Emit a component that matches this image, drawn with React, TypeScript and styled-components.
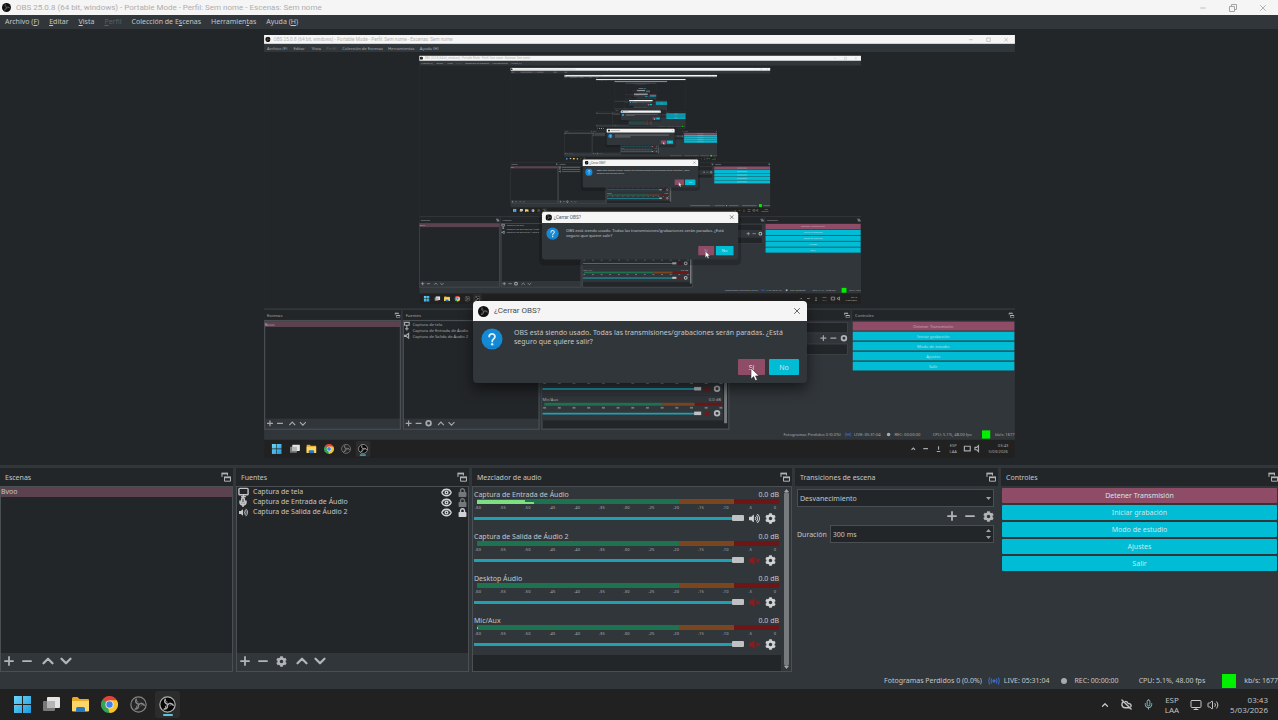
import React from 'react';
import styled, { createGlobalStyle, css } from 'styled-components';
import { Plus, Minus, ChevronUp, ChevronDown, X, Eye, Monitor, Mic, CloudOff, Volume2 } from 'lucide-react';
import { FaCog, FaLock, FaVolumeUp, FaVolumeMute } from 'react-icons/fa';

const color = {
  panel: '#31363b',
  dark: '#232629',
  border: '#4a4f53',
  text: '#c4c6c7',
  cyan: '#00bcd4',
  slider: '#1fa1b3',
  pink: '#8e4c66',
  selected: '#5c414e',
  taskbar: '#212121',
};

const GlobalStyle = createGlobalStyle`
  *, *::before, *::after { box-sizing: border-box; }
  html, body, #root { height: 100%; }
  body { margin: 0; overflow: hidden; background: ${color.taskbar}; }
  body, button, input, select { font-family: 'Noto Sans', 'Open Sans', sans-serif; font-size: 7px; }
  button { margin: 0; padding: 0; border: 0; background: none; color: inherit; display: inline-flex; align-items: center; justify-content: center; }
  svg { display: block; flex: none; }
`;

const Screen = styled.div`
  position: relative;
  display: flex;
  flex-direction: column;
  height: 100vh;
  color: ${color.text};
  background: ${color.panel};
  overflow: hidden;
`;

const TitleBar = styled.header`
  display: flex;
  align-items: center;
  height: 15px;
  padding: 0 10px 0 2px;
  gap: 5px;
  background: #f5f5f5;
  color: #aeaeae;
`;

const WindowTitle = styled.h1`
  flex: 1;
  margin: 0;
  font: 400 8px/14px Roboto, sans-serif;
`;

const WindowButtons = styled.div`
  display: flex;
  gap: 20px;
`;

const CaptionButton = styled.button`
  width: 10px;
  height: 10px;
  color: #a4a4a4;
`;

const MenuBar = styled.nav`
  display: flex;
  align-items: center;
  gap: 10px;
  height: 14px;
  padding-left: 5px;
`;

const MenuItem = styled.button<{ $dim?: boolean }>`
  line-height: 14px;
  white-space: pre;
  color: ${(p) => (p.$dim ? '#5b6065' : color.text)};
`;

const Preview = styled.main`
  flex: 1;
  min-height: 0;
  padding: 6px 0 7px 1px;
  background: ${color.dark};
  & > svg { width: 100%; height: 100%; }
`;

const Docks = styled.div`
  display: grid;
  grid-template-columns: 233fr 233fr 320fr 203fr 277fr;
  gap: 3px;
  height: 207px;
  padding-top: 3px;
`;

const Dock = styled.section`
  display: flex;
  flex-direction: column;
  min-width: 0;
  overflow: hidden;
`;

const DockHeader = styled.div<{ $flush?: boolean }>`
  display: flex;
  align-items: center;
  justify-content: space-between;
  height: 18px;
  padding: 0 ${(p) => (p.$flush ? 0 : 2)}px 0 5px;
  background: ${color.dark};
`;

const DockTitle = styled.h2`
  margin: 0;
  font-size: 7px;
  font-weight: 400;
`;

const Frame = styled.div`
  flex: 1;
  display: flex;
  flex-direction: column;
  min-height: 0;
  border: 1px solid ${color.border};
`;

const List = styled.ul`
  flex: 1;
  margin: 0;
  padding: 0;
  list-style: none;
  background: ${color.dark};
`;

const SceneRow = styled.li`
  height: 10px;
  line-height: 10px;
  background: ${color.selected};
`;

const SourceRow = styled.li`
  display: flex;
  align-items: center;
  height: 10px;
  padding: 0 1px 0 1px;
  gap: 5px;
`;

const SourceIcon = styled.span`
  display: flex;
  justify-content: center;
  width: 10px;
`;

const SourceName = styled.span`
  flex: 1;
  line-height: 10px;
`;

const RowButtons = styled.span`
  display: flex;
  align-items: center;
  gap: 5px;
`;

const IconButton = styled.button<{ $faint?: boolean }>`
  min-width: 10px;
  height: 10px;
  color: ${(p) => (p.$faint ? '#74787b' : '#d0d2d3')};
`;

const ToolBar = styled.div`
  display: flex;
  align-items: center;
  gap: 6px;
  height: 18px;
  padding: 0 0 2px 2px;
`;

const ToolButton = styled.button<{ $apart?: boolean }>`
  width: 12px;
  height: 14px;
  margin-left: ${(p) => (p.$apart ? 3 : 0)}px;
  color: #b3b5b6;
`;

const MixerFrame = styled(Frame)`
  flex-direction: row;
  background: ${color.dark};
`;

const Channels = styled.div`
  flex: 1;
  min-width: 0;
`;

const Channel = styled.div`
  height: 42px;
  padding: 3px 2px 0 1px;
  background: ${color.panel};
`;

const ChannelHead = styled.div`
  display: flex;
  justify-content: space-between;
  height: 9px;
  line-height: 9px;
`;

const Meter = styled.div`
  display: flex;
  flex-direction: column;
  justify-content: center;
  height: 5px;
  margin-left: 3px;
  background: linear-gradient(to right, #1d7250 67%, #7b451d 67% 85%, #6e1515 85%);
`;

const Level = styled.div`
  height: 2px;
  background: #7ce083;
`;

const Scale = styled.div`
  display: flex;
  justify-content: space-between;
  height: 8px;
  color: #b0b3b5;
  font-size: 4px;
  line-height: 8px;
`;

const Tick = styled.span`
  width: 8px;
  text-align: center;
`;

const FaderRow = styled.div`
  display: flex;
  align-items: center;
  gap: 5px;
  height: 12px;
  padding-right: 3px;
`;

const thumb = css`
  appearance: none;
  width: 12px;
  height: 6px;
  border: 0;
  border-radius: 1px;
  background: #bfc1c2;
`;

const Fader = styled.input`
  appearance: none;
  flex: 1;
  min-width: 0;
  height: 6px;
  margin: 0;
  background: linear-gradient(${color.slider}, ${color.slider}) center / 100% 3px no-repeat;
  &::-webkit-slider-thumb { ${thumb} }
  &::-moz-range-thumb { ${thumb} }
`;

const ScrollBar = styled.div`
  display: flex;
  flex-direction: column;
  align-items: center;
  justify-content: space-between;
  width: 10px;
  padding: 2px 0;
  background: ${color.panel};
`;

const ScrollThumb = styled.div`
  flex: 1;
  width: 5px;
  border-radius: 2px;
  background: #777b7e;
`;

const Transitions = styled.div`
  display: flex;
  flex-direction: column;
  padding: 3px 4px 0 2px;
`;

const Field = styled.div`
  flex: 1;
  display: flex;
  align-items: center;
  height: 18px;
  padding-right: 2px;
  background: ${color.dark};
  border: 1px solid ${color.border};
`;

const fieldText = css`
  flex: 1;
  min-width: 0;
  height: 16px;
  padding: 0 2px;
  border: 0;
  outline: 0;
  background: transparent;
  color: ${color.text};
`;

const Select = styled.select`
  ${fieldText}
  appearance: none;
`;

const DurationInput = styled.input`
  ${fieldText}
`;

const Spinner = styled.span`
  display: flex;
  flex-direction: column;
  gap: 4px;
`;

const TransitionTools = styled.div`
  display: flex;
  align-items: center;
  justify-content: flex-end;
  gap: 6px;
  height: 18px;
`;

const DurationRow = styled.div`
  display: flex;
  align-items: center;
  gap: 3px;
`;

const Controls = styled.div`
  display: flex;
  flex-direction: column;
  gap: 2px;
  padding: 2px 1px 0;
`;

const ControlButton = styled.button<{ $active?: boolean }>`
  height: 15px;
  border-radius: 1px;
  background: ${(p) => (p.$active ? color.pink : color.cyan)};
  color: #d0e6ea;
`;

const StatusBar = styled.footer`
  display: flex;
  align-items: center;
  justify-content: flex-end;
  height: 17px;
  white-space: nowrap;
`;

const StatusItem = styled.span<{ $gap: number }>`
  display: flex;
  align-items: center;
  gap: 4px;
  margin-left: ${(p) => p.$gap}px;
`;

const Dot = styled.span`
  width: 6px;
  height: 6px;
  margin-right: 3px;
  border-radius: 3px;
  background: #a8abad;
`;

const Health = styled.span`
  width: 14px;
  height: 14px;
  margin-right: 4px;
  background: #00f000;
`;

const TaskBar = styled.div`
  display: flex;
  align-items: center;
  justify-content: space-between;
  height: 31px;
  padding: 0 10px;
  background: ${color.taskbar};
  font-family: 'Open Sans', sans-serif;
`;

const TaskGroup = styled.div`
  display: flex;
  align-items: center;
  gap: 4px;
`;

const TaskButton = styled.button<{ $active?: boolean }>`
  flex-direction: column;
  gap: 1px;
  width: 25px;
  height: 27px;
  border-radius: 3px;
  background: ${(p) => (p.$active ? '#2b2c2c' : 'transparent')};
  padding-top: ${(p) => (p.$active ? 2 : 0)}px;
`;

const ActiveMark = styled.span`
  width: 10px;
  height: 2px;
  border-radius: 1px;
  background: #5ec3d6;
`;

const Tray = styled.div`
  display: flex;
  align-items: center;
  gap: 11px;
  color: #c4c6c7;
`;

const TrayPair = styled.span`
  display: flex;
  gap: 5px;
`;

const TrayText = styled.div<{ $end?: boolean }>`
  font-size: 8px;
  line-height: 10px;
  text-align: ${(p) => (p.$end ? 'right' : 'center')};
`;

const Overlay = styled.div`
  position: absolute;
  inset: 0;
  display: flex;
  justify-content: center;
  align-items: flex-start;
  padding: 301px 0 0 2px;
  pointer-events: none;
`;

const Dialog = styled.div`
  position: relative;
  width: 334px;
  border-radius: 4px;
  overflow: hidden;
  background: ${color.panel};
  box-shadow: 0 6px 14px rgba(0, 0, 0, 0.55);
`;

const DialogTitle = styled.div`
  display: flex;
  align-items: center;
  gap: 5px;
  height: 20px;
  padding: 0 5px;
  background: #f5f5f5;
  color: #4c4c4c;
  font: 400 8px/20px Roboto, sans-serif;
  span { flex: 1; }
`;

const DialogBody = styled.div`
  display: flex;
  gap: 11px;
  height: 38px;
  padding: 7px 8px 0;
`;

const DialogText = styled.p`
  margin: 0;
  flex: 1;
  line-height: 9px;
`;

const DialogActions = styled.div`
  display: flex;
  justify-content: flex-end;
  gap: 4px;
  height: 24px;
  padding-right: 8px;
`;

const DialogButton = styled.button<{ $active?: boolean }>`
  width: ${(p) => (p.$active ? 27 : 30)}px;
  height: 16px;
  border-radius: 1px;
  background: ${(p) => (p.$active ? color.pink : color.cyan)};
  color: #d0e6ea;
`;

const Pointer = styled.svg`
  position: absolute;
  right: 47px;
  bottom: 1px;
`;

/* ---------- content ---------- */

const TITLE = 'OBS 25.0.8 (64 bit, windows) - Portable Mode - Perfil: Sem nome - Escenas: Sem nome';
const MENU = [
  { pre: 'Archivo (', key: 'F', post: ')', x: 5 },
  { pre: '', key: 'E', post: 'ditar', x: 50 },
  { pre: '', key: 'V', post: 'ista', x: 81 },
  { pre: '', key: 'P', post: 'erfil', x: 106, dim: true },
  { pre: 'Colección de E', key: 's', post: 'cenas', x: 133 },
  { pre: 'Herramien', key: 't', post: 'as', x: 211 },
  { pre: 'Ayuda (', key: 'H', post: ')', x: 265 },
];
const SOURCES = ['Captura de tela', 'Captura de Entrada de Áudio', 'Captura de Salida de Áudio 2'];
const CHANNELS = ['Captura de Entrada de Áudio', 'Captura de Salida de Áudio 2', 'Desktop Áudio', 'Mic/Aux'];
const CONTROLS = ['Detener Transmisión', 'Iniciar grabación', 'Modo de estudio', 'Ajustes', 'Salir'];
const TICKS = [-60, -55, -50, -45, -40, -35, -30, -25, -20, -15, -10, -5, 0];
const QUESTION = [
  'OBS está siendo usado. Todas las transmisiones/grabaciones serán paradas. ¿Está',
  'seguro que quiere salir?',
];

/* ---------- icons ---------- */

type Place = { x?: number; y?: number };

const ObsArms = ({ stroke, width }: { stroke: string; width: number }) => (
  <>
    {[0, 120, 240].map((turn) => (
      <g key={turn} transform={`rotate(${turn} 12 12)`} fill="none" stroke={stroke} strokeWidth={width} strokeLinecap="round">
        <path d="M12 11.500C8.500 10.800 7 8 8.800 4.600" />
        <path d="M8.800 4.600C8.600 6.600 9.600 8 11.400 8.400" strokeWidth={width * 0.6} />
      </g>
    ))}
  </>
);

const ObsMark = ({ x, y, size, disc, line }: Place & { size: number; disc: string; line: string }) => (
  <svg x={x} y={y} width={size} height={size} viewBox="0 0 24 24">
    <circle cx="12" cy="12" r="10.800" fill={disc} stroke={line} strokeWidth="1.700" />
    <ObsArms stroke={line} width={2} />
  </svg>
);

const ObsBadge = ({ x, y, size = 9 }: Place & { size?: number }) => (
  <svg x={x} y={y} width={size} height={size} viewBox="0 0 24 24">
    <circle cx="12" cy="12" r="12" fill="#101010" />
    <ObsArms stroke="#6a6a6a" width={2} />
  </svg>
);

const DockIcon = ({ x, y }: Place) => (
  <svg x={x} y={y} width="10" height="10" viewBox="0 0 10 10" fill="none" stroke="#b0b2b3">
    <path d="M1 5V1.500H6.500V3.500" />
    <path d="M.5 1.500H7" strokeWidth="1.800" />
    <path d="M3.500 5.500H9.500V9.200H3.500Z" />
    <path d="M3 5.300H10" strokeWidth="1.800" />
  </svg>
);

const Arrow = ({ up }: { up?: boolean }) => (
  <svg width="5" height="3" viewBox="0 0 5 3">
    <path d={up ? 'M0 3 2.500 0 5 3Z' : 'M0 0 2.500 3 5 0Z'} fill="#a0a3a4" />
  </svg>
);

const HelpIcon = ({ x, y }: Place) => (
  <svg x={x} y={y} width="22" height="22" viewBox="0 0 22 22">
    <circle cx="11" cy="11" r="10.500" fill="#1489d6" />
    <path d="M3 15A9.500 9.500 0 0 0 19 15.500 10 10 0 0 1 3 15Z" fill="#0c67b5" />
    <path d="M8.200 8.600C8.200 5 14 5 14 8.600 14 10.800 11.200 10.900 11.200 13.400" fill="none" stroke="#d9effb" strokeWidth="1.800" strokeLinecap="round" />
    <circle cx="11.200" cy="16.200" r="1.200" fill="#d9effb" />
  </svg>
);

const Arrowhead = () => <path d="M1 0V11L3.600 8.600 5.400 12.600 7.300 11.700 5.500 7.900H9Z" fill="#fff" stroke="#333" strokeWidth=".6" />;

const WindowsIcon = ({ x, y }: Place) => (
  <svg x={x} y={y} width="17" height="17" viewBox="0 0 17 17">
    <defs>
      <linearGradient id="win" x1="0" y1="0" x2="1" y2="1">
        <stop offset="0" stopColor="#6fd6f7" />
        <stop offset="1" stopColor="#1c9be0" />
      </linearGradient>
    </defs>
    <path d="M0 0H8V8H0ZM9 0H17V8H9ZM0 9H8V17H0ZM9 9H17V17H9Z" fill="url(#win)" />
  </svg>
);

const TaskViewIcon = ({ x, y }: Place) => (
  <svg x={x} y={y} width="17" height="15" viewBox="0 0 17 15">
    <rect y="4" width="12" height="10" rx="1" fill="#77797a" />
    <rect x="4" width="13" height="11" rx="1" fill="#e4e4e4" />
    <rect x="4" y="4" width="8" height="7" fill="#b4b5b5" />
  </svg>
);

const FolderIcon = ({ x, y }: Place) => (
  <svg x={x} y={y} width="17" height="15" viewBox="0 0 17 15">
    <path d="M0 1.500Q0 0 1.500 0H5.500L7.500 2H16Q17 2 17 3V14H0Z" fill="#e6a92a" />
    <path d="M0 4H17V13.500Q17 14.500 16 14.500H1Q0 14.500 0 13.500Z" fill="#fbd568" />
    <path d="M4 15V11.500Q4 10 5.500 10H11.500Q13 10 13 11.500V15Z" fill="#2479c4" />
  </svg>
);

const ChromeIcon = ({ x, y }: Place) => (
  <svg x={x} y={y} width="17" height="17" viewBox="0 0 48 48">
    <path d="M24 24 3.200 12A24 24 0 0 1 44.800 12Z" fill="#e0443a" />
    <path d="M24 24 44.800 12A24 24 0 0 1 24 48Z" fill="#f6c52c" />
    <path d="M24 24 24 48A24 24 0 0 1 3.200 12Z" fill="#35a354" />
    <path d="M24 12H44.800L34 30Z" fill="#f6c52c" />
    <path d="M34.400 30 24 48 20 34Z" fill="#f6c52c" />
    <path d="M13.600 30 3.200 12 18 14Z" fill="#35a354" />
    <circle cx="24" cy="24" r="11.500" fill="#eee" />
    <circle cx="24" cy="24" r="9" fill="#3f83e8" />
  </svg>
);

const ObsTaskIcon = ({ x, y, active }: Place & { active?: boolean }) => (
  <ObsMark x={x} y={y} size={17} disc={active ? '#050505' : '#262626'} line={active ? '#b0b0b0' : '#858585'} />
);

const LiveIcon = ({ x, y }: Place) => (
  <svg x={x} y={y} width="12" height="8" viewBox="0 0 12 8" fill="none" stroke="#3d6fd0">
    <path d="M1.500.5Q0 4 1.500 7.500M3.600 1.500Q2.500 4 3.600 6.500M10.500.5Q12 4 10.500 7.500M8.400 1.500Q9.500 4 8.400 6.500" />
    <circle cx="6" cy="4" r="1.200" fill="#3d6fd0" />
  </svg>
);

/* ---------- captured desktop shown in the preview ---------- */

const MAX_DEPTH = 9;

type WriteProps = { x: number; y: number; depth: number; w: number; fill?: string; font?: string; size?: number; anchor?: 'start' | 'middle'; children: string };

/* Past the second generation the words are only a pale streak. */
const Write = ({ x, y, depth, w, fill = '#a6a9ab', font = 'Noto Sans', size = 7, anchor = 'start', children }: WriteProps) =>
  depth > 2 ? (
    <rect x={anchor === 'middle' ? x - w / 2 : x} y={y - 5} width={w} height="5" fill={fill} opacity=".4" />
  ) : (
    <text x={x} y={y} fill={fill} fontSize={size} textAnchor={anchor} fontFamily={`'${font}', sans-serif`}>
      {children}
    </text>
  );

/* Titles and names behind the enclosing dialog are never visible, so they are left out. */
const PANELS = [
  { name: 'Escenas', x: 0, w: 233 },
  { name: 'Fuentes', x: 236, w: 233 },
  { name: '', x: 472, w: 320 },
  { name: '', x: 795, w: 203 },
  { name: 'Controles', x: 1001, w: 277 },
];

const Capture = ({ depth }: { depth: number }) => (
  <>
    <rect width="1278" height="720" fill={color.panel} />
    <rect width="1278" height="15" fill="#f5f5f5" />
    <ObsBadge x={2} y={3} />
    <Write x={16} y={10} w={304} depth={depth} fill="#b4b4b4" font="Roboto" size={8}>{TITLE}</Write>
    <path d="M1200 8h6M1230 5h6v6h-6ZM1260 5l6 6M1266 5l-6 6" stroke="#aaa" fill="none" />
    {MENU.map((m) => (
      <Write key={m.x} x={m.x} y={25} w={m.post.length * 4 + 10} depth={depth} fill={m.dim ? '#5b6065' : undefined}>
        {m.pre + m.key + m.post}
      </Write>
    ))}
    <rect y="29" width="1278" height="436" fill={color.dark} />
    {depth < MAX_DEPTH && (
      <svg x="264" y="35" width="752" height="423" viewBox="0 0 1278 720" preserveAspectRatio="none">
        <Capture depth={depth + 1} />
      </svg>
    )}
    {PANELS.map((p) => (
      <g key={p.x}>
        <rect x={p.x} y="468" width={p.w} height="18" fill={color.dark} />
        {p.name && <Write x={p.x + 5} y={480} w={30} depth={depth}>{p.name}</Write>}
        <DockIcon x={p.x + p.w - 11} y={472} />
      </g>
    ))}
    {PANELS.slice(0, 3).map((p, i) => (
      <g key={p.x}>
        <rect x={p.x + 1} y="487" width={p.w - 2} height={i === 2 ? 183 : 166} fill={color.dark} />
        <rect x={p.x + 1} y="486" width={p.w - 2} height="185" fill="none" stroke={color.border} strokeWidth="2" />
      </g>
    ))}
    <rect x="1" y="487" width="231" height="10" fill={color.selected} />
    <Write x={1} y={495} w={16} depth={depth}>Bvoo</Write>
    {SOURCES.map((s, i) => (
      <Write key={s} x={253} y={495 + i * 10} w={90} depth={depth}>{s}</Write>
    ))}
    <g stroke="#a6a9ab" strokeWidth="2" fill="none">
      <path d="M239 489h8v5h-8ZM243 494v9M240 500h6M239 511h3l4-3v8l-4-3h-3Z" />
      {[0, 236].map((dx) => (
        <path key={dx} d={`M${dx + 5} 661h10M${dx + 10} 656v10M${dx + 22} 661h10M${dx + (dx ? 60 : 43)} 664l5-5 5 5M${dx + (dx ? 78 : 61)} 659l5 5 5-5`} />
      ))}
      <circle cx="280" cy="661" r="4" strokeWidth="3" />
    </g>
    {CHANNELS.map((c, i) => (
      <g key={c} transform={`translate(0 ${i * 42})`}>
        <rect x="473" y="488" width="308" height="42" fill={color.panel} />
        {i === 3 && (
          <>
            <Write x={474} y={497} w={25} depth={depth}>{c}</Write>
            <Write x={757} y={497} w={20} depth={depth}>0.0 dB</Write>
          </>
        )}
        <rect x="477" y="500" width="201" height="5" fill="#1d7250" />
        <rect x="678" y="500" width="55" height="5" fill="#7b451d" />
        <rect x="733" y="500" width="46" height="5" fill="#6e1515" />
        {TICKS.map((t, k) => (
          <rect key={t} x={475 + k * 25} y="507" width="5" height="3" fill="#a3a6a8" opacity=".6" />
        ))}
        <rect x="474" y="517" width="260" height="3" fill={color.slider} />
        <rect x="732" y="515" width="12" height="6" fill="#bfc1c2" />
        <rect x="750" y="515" width="9" height="7" fill="#6e1a1d" />
        <circle cx="771" cy="518" r="4" fill="none" stroke="#b4b6b7" strokeWidth="3" />
      </g>
    ))}
    <rect x="783" y="496" width="5" height="165" rx="2" fill="#777b7e" />
    <rect x="797" y="489" width="196" height="18" fill={color.dark} stroke={color.border} />
    <path d="M947 516h10M952 511v10M964 516h10" stroke="#a6a9ab" strokeWidth="2" />
    <circle cx="987" cy="516" r="4" fill="none" stroke="#b4b6b7" strokeWidth="3" />
    <rect x="828" y="526" width="165" height="18" fill={color.dark} stroke={color.border} />
    {CONTROLS.map((c, i) => (
      <g key={c}>
        <rect x="1002" y={488 + i * 17} width="275" height="15" fill={i ? color.cyan : color.pink} />
        <Write x={1139} y={498 + i * 17} w={50} depth={depth} fill={i ? '#b5e2ea' : '#c9aab7'} anchor="middle">{c}</Write>
      </g>
    ))}
    <Write x={884} y={683} w={98} depth={depth}>Fotogramas Perdidos 0 (0.0%)</Write>
    <LiveIcon x={988} y={676} />
    <Write x={1004} y={683} w={50} depth={depth}>LIVE: 05:31:04</Write>
    <circle cx="1063" cy="680" r="3" fill="#a8abad" />
    <Write x={1073} y={683} w={48} depth={depth}>REC: 00:00:00</Write>
    <Write x={1138} y={683} w={72} depth={depth}>CPU: 5.1%, 48.00 fps</Write>
    <rect x="1222" y="673" width="14" height="14" fill="#00f000" />
    <Write x={1244} y={683} w={33} depth={depth}>kb/s: 1677</Write>
    <rect y="689" width="1278" height="31" fill={color.taskbar} />
    <WindowsIcon x={13} y={696} />
    <TaskViewIcon x={44} y={697} />
    <FolderIcon x={72} y={697} />
    <ChromeIcon x={102} y={696} />
    <ObsTaskIcon x={131} y={696} />
    <rect x="156" y="691" width="25" height="27" rx="3" fill="#2b2c2c" />
    <ObsTaskIcon x={160} y={696} active />
    <rect x="163" y="714" width="10" height="2" fill="#5ec3d6" />
    <path d="M1102 706l3-3 3 3M1122 704h8M1148 700v6M1145 709h6M1192 700h10v8h-10ZM1210 702h3l3-3v10l-3-3h-3Z" stroke="#a6a9ab" strokeWidth="2" fill="none" />
    <Write x={1173} y={702} w={14} depth={depth} anchor="middle">ESP</Write>
    <Write x={1173} y={712} w={14} depth={depth} anchor="middle">LAA</Write>
    <Write x={1249} y={702} w={18} depth={depth}>03:43</Write>
    <Write x={1233} y={712} w={36} depth={depth}>5/03/2026</Write>
    <rect x="468" y="304" width="344" height="88" rx="8" fill="#000" opacity=".2" />
    <rect x="473" y="301" width="334" height="81" rx="4" fill={color.panel} />
    <path d="M473 320V305Q473 301 477 301H803Q807 301 807 305V320Z" fill="#f5f5f5" />
    <ObsBadge x={479} y={305} size={11} />
    <Write x={493} y={313} w={46} font="Roboto" size={8} depth={depth} fill="#555">¿Cerrar OBS?</Write>
    <path d="M793 307l6 6M799 307l-6 6" stroke="#444" />
    <HelpIcon x={480} y={327} />
    <Write x={514} y={335} w={265} depth={depth} fill="#c0c2c3">{QUESTION[0]}</Write>
    <Write x={514} y={344} w={76} depth={depth} fill="#c0c2c3">{QUESTION[1]}</Write>
    <rect x="739" y="359" width="27" height="16" rx="1" fill={color.pink} />
    <rect x="769" y="359" width="30" height="16" rx="1" fill={color.cyan} />
    <Write x={752} y={370} w={6} depth={depth} anchor="middle">Sí</Write>
    <Write x={784} y={370} w={9} depth={depth} fill="#d8eef1" anchor="middle">No</Write>
    <g transform="translate(750 368)"><Arrowhead /></g>
  </>
);

/* ---------- page ---------- */

const PanelHeader = ({ title, flush }: { title: string; flush?: boolean }) => (
  <DockHeader $flush={flush}>
    <DockTitle>{title}</DockTitle>
    <IconButton aria-label={`Desacoplar ${title}`}><DockIcon /></IconButton>
  </DockHeader>
);

const ListTools = ({ gear }: { gear?: boolean }) => (
  <ToolBar>
    <ToolButton aria-label="Añadir"><Plus size={14} strokeWidth={3} /></ToolButton>
    <ToolButton aria-label="Quitar"><Minus size={14} strokeWidth={3} /></ToolButton>
    {gear && <ToolButton aria-label="Propiedades"><FaCog size={11} /></ToolButton>}
    <ToolButton $apart aria-label="Subir"><ChevronUp size={18} strokeWidth={3} /></ToolButton>
    <ToolButton aria-label="Bajar"><ChevronDown size={18} strokeWidth={3} /></ToolButton>
  </ToolBar>
);

const sourceIcons = [
  <Monitor size={11} strokeWidth={3} key="m" />,
  <Mic size={10} strokeWidth={4} key="a" />,
  <FaVolumeUp size={9} key="v" />,
];

export default function App() {
  return (
    <>
      <GlobalStyle />
      <Screen>
        <TitleBar>
          <ObsBadge />
          <WindowTitle>{TITLE}</WindowTitle>
          <WindowButtons>
            <CaptionButton aria-label="Minimizar"><Minus size={8} strokeWidth={2} /></CaptionButton>
            <CaptionButton aria-label="Restaurar">
              <svg width="8" height="8" viewBox="0 0 8 8" fill="none" stroke="currentColor"><path d="M.5 2.500h5v5h-5ZM2.500 2V.5h5v5H6" /></svg>
            </CaptionButton>
            <CaptionButton aria-label="Cerrar"><X size={10} strokeWidth={2} /></CaptionButton>
          </WindowButtons>
        </TitleBar>

        <MenuBar>
          {MENU.map((m) => (
            <MenuItem key={m.x} $dim={m.dim} disabled={m.dim}>{m.pre}<u>{m.key}</u>{m.post}</MenuItem>
          ))}
        </MenuBar>

        <Preview>
          <svg viewBox="0 0 1278 720" role="img" aria-label="Captura de tela">
            <Capture depth={1} />
          </svg>
        </Preview>

        <Docks>
          <Dock>
            <PanelHeader title="Escenas" />
            <Frame>
              <List><SceneRow>Bvoo</SceneRow></List>
              <ListTools />
            </Frame>
          </Dock>

          <Dock>
            <PanelHeader title="Fuentes" />
            <Frame>
              <List>
                {SOURCES.map((s, i) => (
                  <SourceRow key={s}>
                    <SourceIcon>{sourceIcons[i]}</SourceIcon>
                    <SourceName>{s}</SourceName>
                    <RowButtons>
                      <IconButton aria-label={`Mostrar ${s}`}><Eye size={11} strokeWidth={3} /></IconButton>
                      <IconButton aria-label={`Bloquear ${s}`} $faint={i < 2}><FaLock size={9} /></IconButton>
                    </RowButtons>
                  </SourceRow>
                ))}
              </List>
              <ListTools gear />
            </Frame>
          </Dock>

          <Dock>
            <PanelHeader title="Mezclador de audio" />
            <MixerFrame>
              <Channels>
                {CHANNELS.map((c, i) => (
                  <Channel key={c}>
                    <ChannelHead><label htmlFor={`fader${i}`}>{c}</label><span>0.0 dB</span></ChannelHead>
                    <Meter>
                      {i === 0 && <><Level style={{ width: '16%' }} /><Level style={{ width: '19%' }} /></>}
                      {i === 3 && <Level style={{ width: 1 }} />}
                    </Meter>
                    <Scale>{TICKS.map((t) => <Tick key={t}>{t}</Tick>)}</Scale>
                    <FaderRow>
                      <Fader id={`fader${i}`} type="range" min={0} max={100} defaultValue={100} />
                      {i === 0
                        ? <IconButton aria-label="Silenciar"><FaVolumeUp size={11} /></IconButton>
                        : <IconButton aria-label="Activar sonido"><FaVolumeMute size={11} color="#8f1a1d" /></IconButton>}
                      <IconButton aria-label="Opciones"><FaCog size={11} /></IconButton>
                    </FaderRow>
                  </Channel>
                ))}
              </Channels>
              <ScrollBar><Arrow up /><ScrollThumb /><Arrow /></ScrollBar>
            </MixerFrame>
          </Dock>

          <Dock>
            <PanelHeader title="Transiciones de escena" />
            <Transitions>
              <Field>
                <Select aria-label="Transición" defaultValue="fade"><option value="fade">Desvanecimiento</option></Select>
                <Arrow />
              </Field>
              <TransitionTools>
                <ToolButton aria-label="Añadir transición"><Plus size={14} strokeWidth={3} /></ToolButton>
                <ToolButton aria-label="Quitar transición"><Minus size={14} strokeWidth={3} /></ToolButton>
                <ToolButton aria-label="Propiedades de transición"><FaCog size={11} /></ToolButton>
              </TransitionTools>
              <DurationRow>
                <label htmlFor="duration">Duración</label>
                <Field>
                  <DurationInput id="duration" defaultValue="300 ms" />
                  <Spinner><Arrow up /><Arrow /></Spinner>
                </Field>
              </DurationRow>
            </Transitions>
          </Dock>

          <Dock>
            <PanelHeader title="Controles" flush />
            <Controls>
              {CONTROLS.map((c, i) => <ControlButton key={c} $active={i === 0}>{c}</ControlButton>)}
            </Controls>
          </Dock>
        </Docks>

        <StatusBar>
          <StatusItem $gap={0}>Fotogramas Perdidos 0 (0.0%)</StatusItem>
          <StatusItem $gap={6}><LiveIcon />LIVE: 05:31:04</StatusItem>
          <StatusItem $gap={12}><Dot />REC: 00:00:00</StatusItem>
          <StatusItem $gap={20}>CPU: 5.1%, 48.00 fps</StatusItem>
          <StatusItem $gap={17}><Health />kb/s: 1677</StatusItem>
        </StatusBar>

        <TaskBar>
          <TaskGroup>
            <TaskButton aria-label="Inicio"><WindowsIcon /></TaskButton>
            <TaskButton aria-label="Vista de tareas"><TaskViewIcon /></TaskButton>
            <TaskButton aria-label="Explorador"><FolderIcon /></TaskButton>
            <TaskButton aria-label="Chrome"><ChromeIcon /></TaskButton>
            <TaskButton aria-label="OBS"><ObsTaskIcon /></TaskButton>
            <TaskButton aria-label="OBS Studio" $active><ObsTaskIcon active /><ActiveMark /></TaskButton>
          </TaskGroup>
          <Tray>
            <ChevronUp size={10} strokeWidth={3} />
            <CloudOff size={11} strokeWidth={3} />
            <Mic size={11} strokeWidth={2} color="#8fc3c9" />
            <TrayText>ESP<br />LAA</TrayText>
            <TrayPair><Monitor size={12} /><Volume2 size={12} /></TrayPair>
            <TrayText $end>03:43<br />5/03/2026</TrayText>
          </Tray>
        </TaskBar>

        <Overlay>
          <Dialog role="dialog" aria-label="¿Cerrar OBS?">
            <DialogTitle>
              <ObsBadge size={11} />
              <span>¿Cerrar OBS?</span>
              <button aria-label="Cerrar diálogo"><X size={10} strokeWidth={2} /></button>
            </DialogTitle>
            <DialogBody>
              <HelpIcon />
              <DialogText>{QUESTION[0]}<br />{QUESTION[1]}</DialogText>
            </DialogBody>
            <DialogActions>
              <DialogButton $active>Sí</DialogButton>
              <DialogButton>No</DialogButton>
            </DialogActions>
            <Pointer width="10" height="14" viewBox="0 0 10 14"><Arrowhead /></Pointer>
          </Dialog>
        </Overlay>
      </Screen>
    </>
  );
}
